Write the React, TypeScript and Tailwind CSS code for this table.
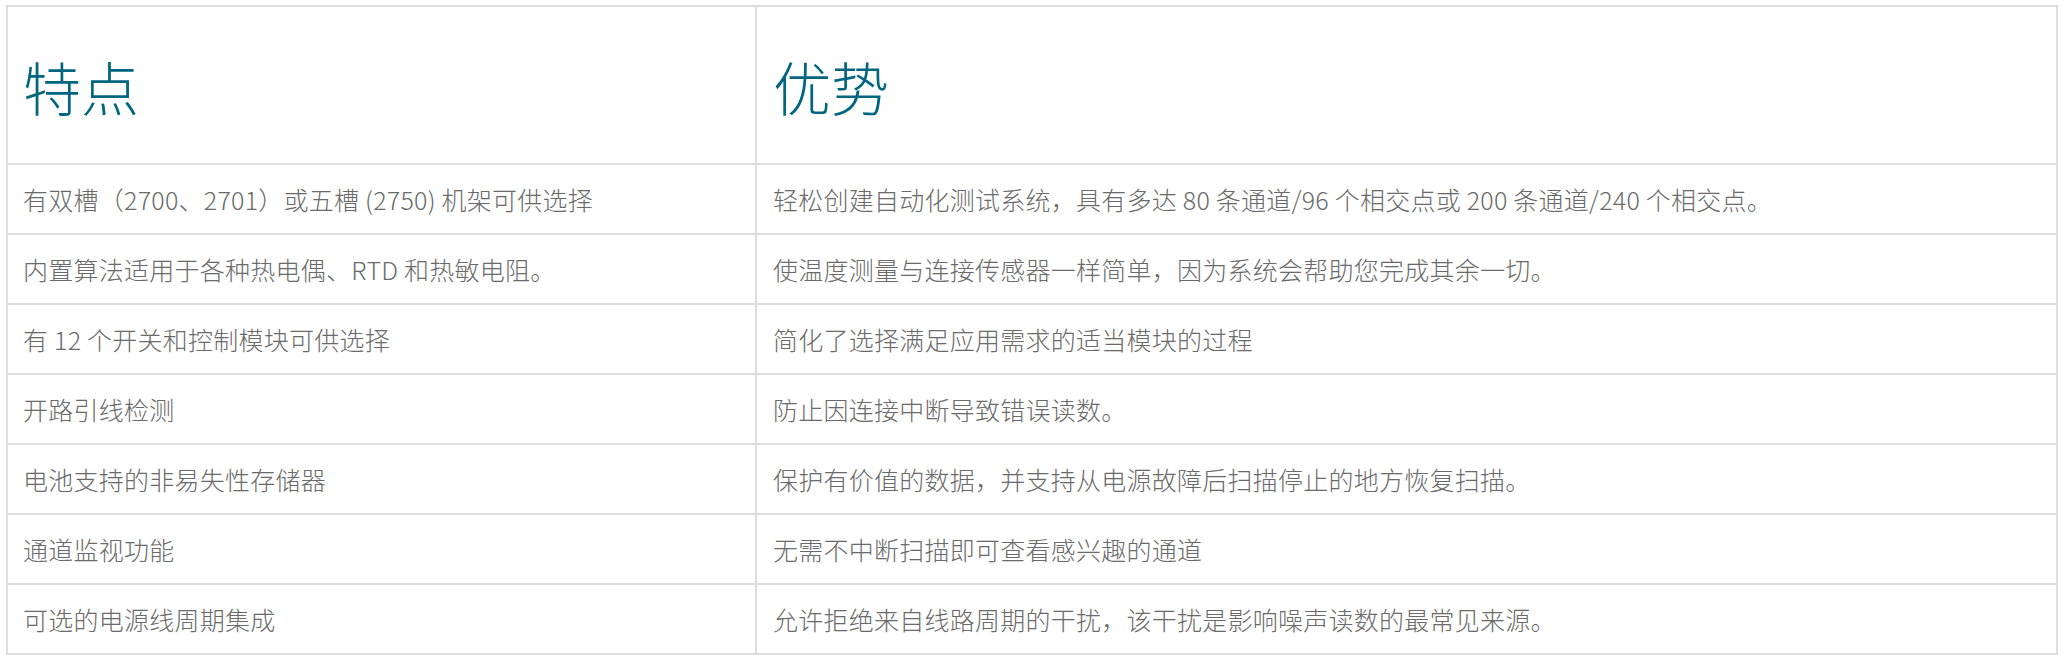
const rows: [string, string][] = [
  [
    "有双槽（2700、2701）或五槽 (2750) 机架可供选择",
    "轻松创建自动化测试系统，具有多达 80 条通道/96 个相交点或 200 条通道/240 个相交点。",
  ],
  [
    "内置算法适用于各种热电偶、RTD 和热敏电阻。",
    "使温度测量与连接传感器一样简单，因为系统会帮助您完成其余一切。",
  ],
  ["有 12 个开关和控制模块可供选择", "简化了选择满足应用需求的适当模块的过程"],
  ["开路引线检测", "防止因连接中断导致错误读数。"],
  [
    "电池支持的非易失性存储器",
    "保护有价值的数据，并支持从电源故障后扫描停止的地方恢复扫描。",
  ],
  ["通道监视功能", "无需不中断扫描即可查看感兴趣的通道"],
  [
    "可选的电源线周期集成",
    "允许拒绝来自线路周期的干扰，该干扰是影响噪声读数的最常见来源。",
  ],
];

export default function App() {
  return (
    <div className="min-h-[666px] bg-white pl-[6px] pt-[5px] font-['Noto_Sans_CJK_SC',sans-serif] font-light">
      <div className="flex w-[2052px] flex-col border-2 border-[#dddddd]">
        <div className="flex h-[158px] border-b-2 border-[#dddddd]">
          <div className="flex w-[749px] shrink-0 items-center border-r-2 border-[#dddddd] pl-[15px] pt-[2px]">
            <h2 className="text-[58px] leading-none text-[#00657f]">特点</h2>
          </div>
          <div className="flex flex-1 items-center pl-[16px] pt-[2px]">
            <h2 className="text-[58px] leading-none text-[#00657f]">优势</h2>
          </div>
        </div>
        {rows.map(([feature, benefit], i) => (
          <div
            key={feature}
            className={`flex text-[25px] leading-none tracking-[0.25px] text-[#6a6a6a] ${
              i < rows.length - 1 ? "h-[70px] border-b-2 border-[#dddddd]" : "h-[68px]"
            }`}
          >
            <div className="flex w-[749px] shrink-0 items-center border-r-2 border-[#dddddd] pl-[15px]">
              {feature}
            </div>
            <div className="flex flex-1 items-center pl-[16px]">{benefit}</div>
          </div>
        ))}
      </div>
    </div>
  );
}
